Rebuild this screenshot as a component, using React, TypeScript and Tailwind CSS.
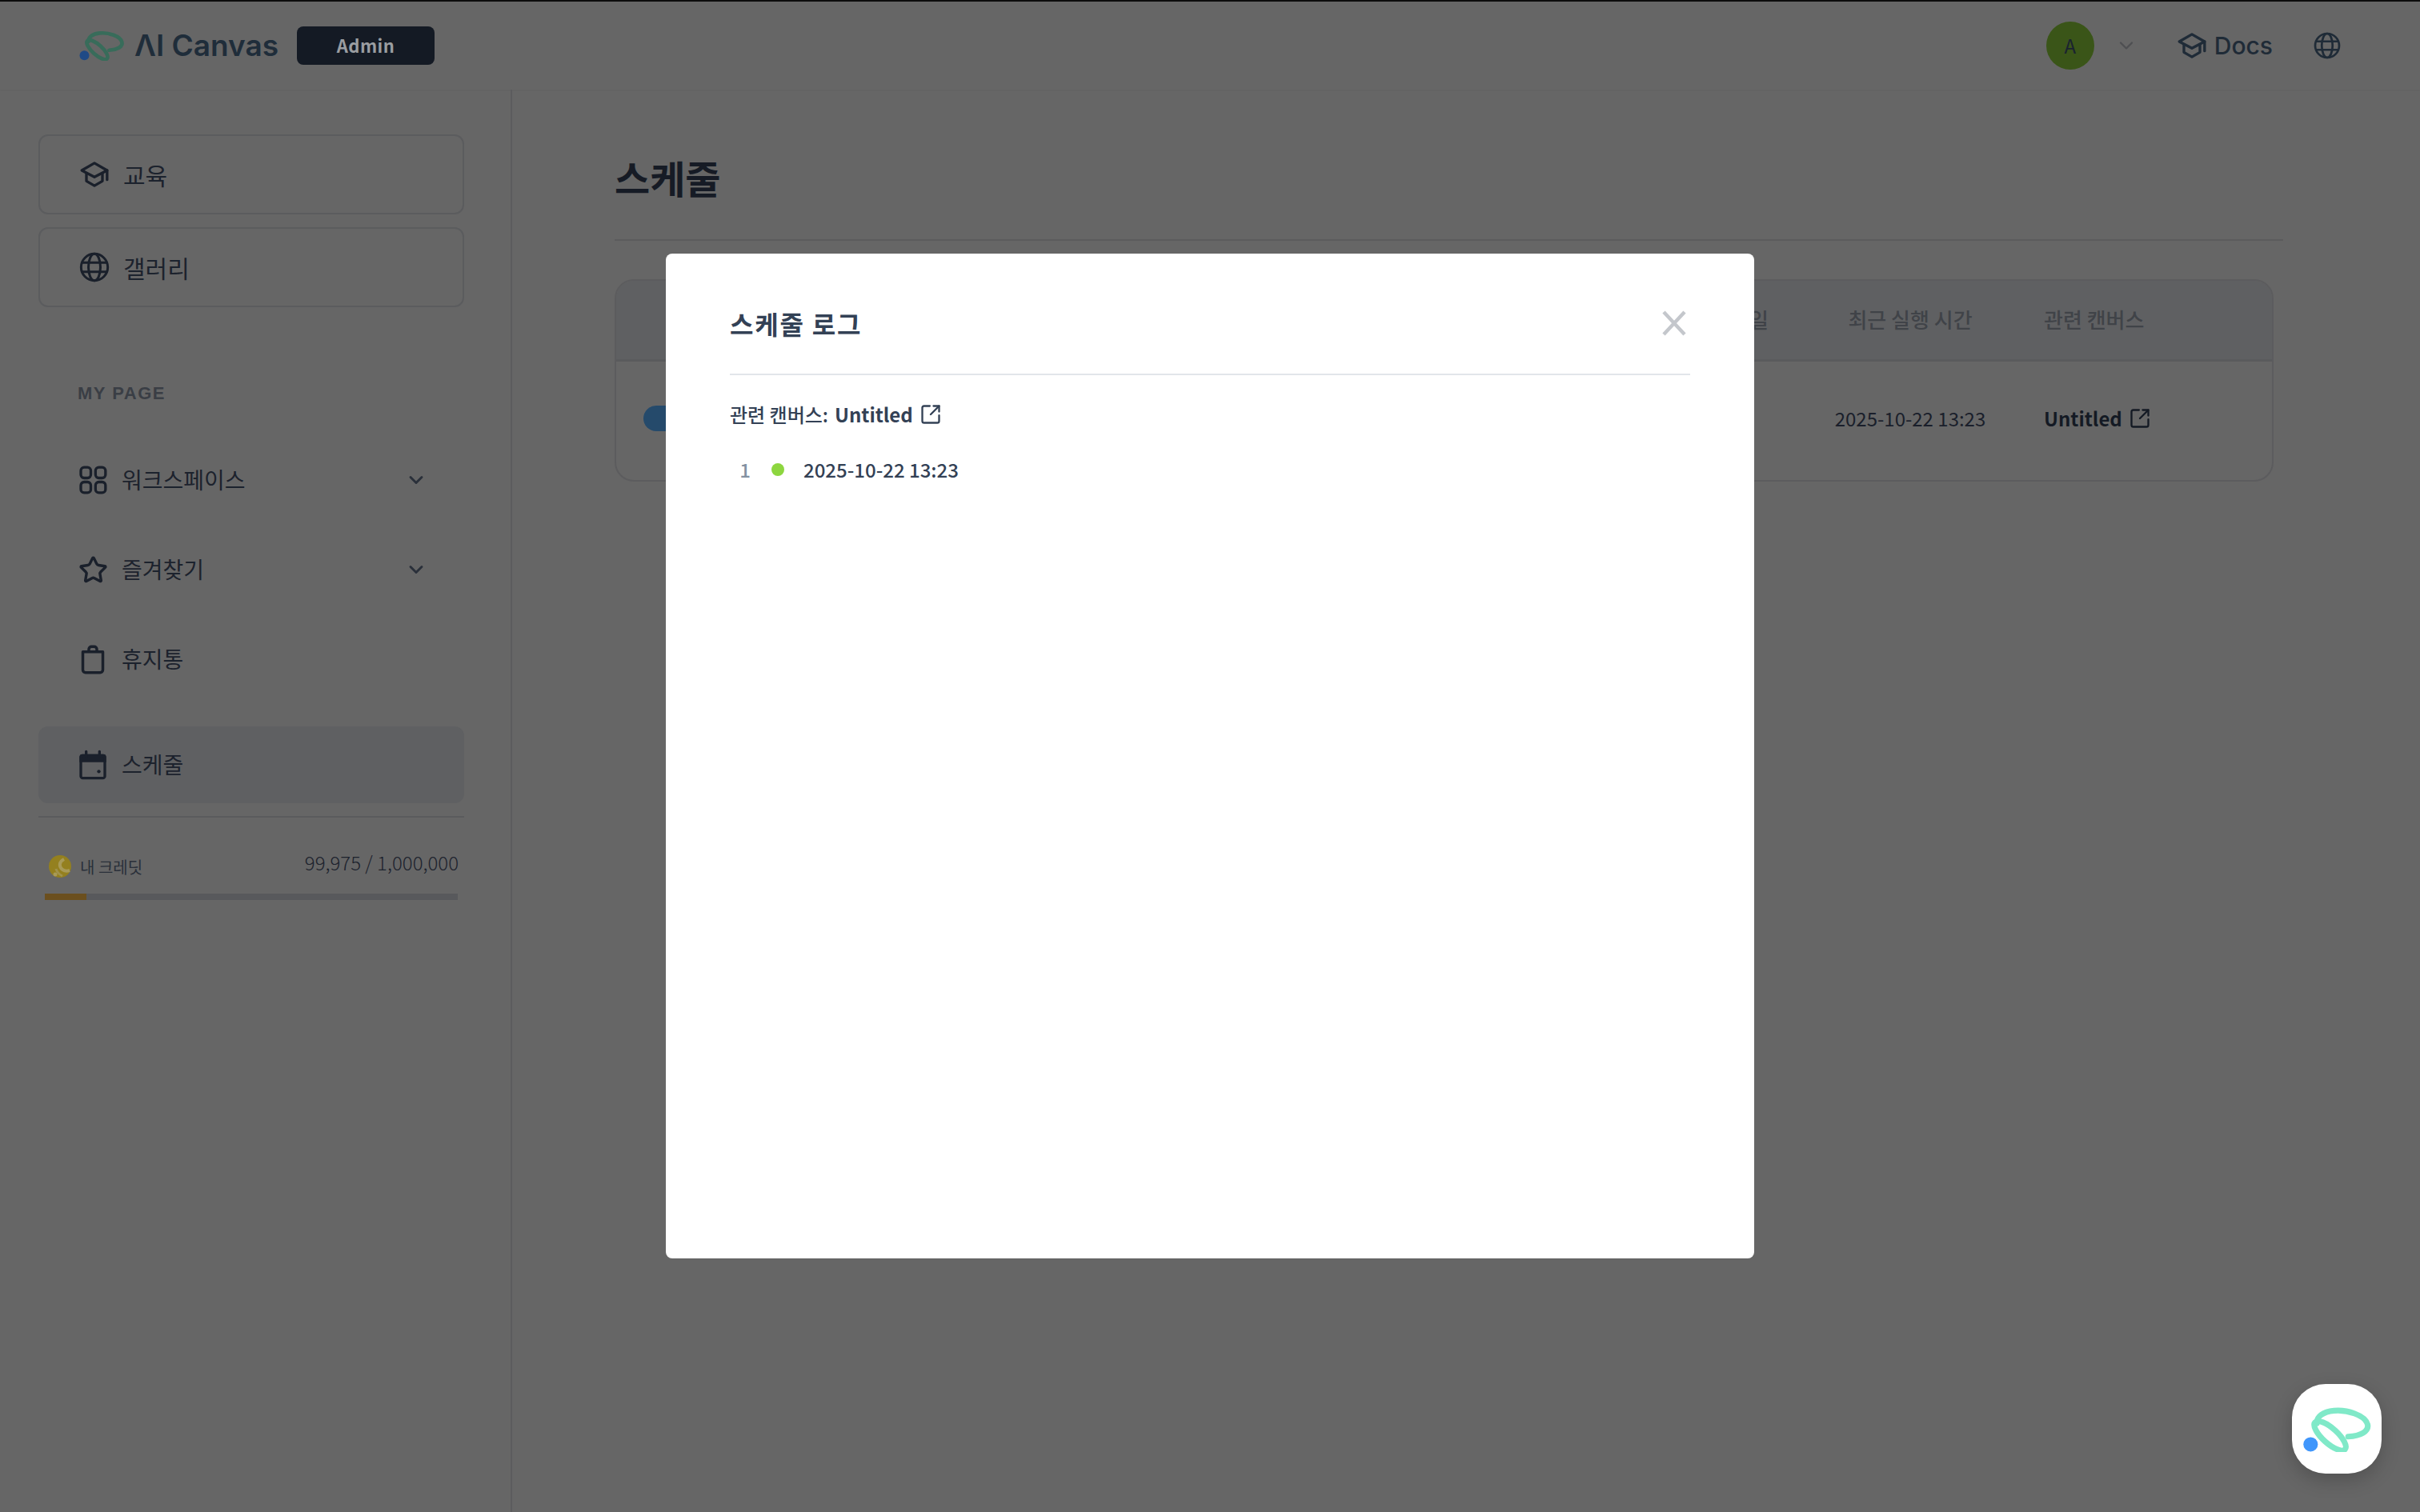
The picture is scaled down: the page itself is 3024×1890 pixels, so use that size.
import { ChevronDown, Star, SquareArrowOutUpRight } from "lucide-react";

const kr = "font-['Noto_Sans_CJK_KR','Noto_Sans',sans-serif]";

function LogoMark({ className, stroke, dot }: { className: string; stroke: string; dot: string }) {
  return (
    <svg viewBox="165 170 272 172" fill="none" className={className}>
      <circle cx="200" cy="313" r="28" fill={dot} />
      <path d="M345 283C395 280 426 262 420 236C411 200 340 178 290 183C248 187 222 206 224 232" stroke={stroke} strokeWidth="22" strokeLinecap="round" />
      <ellipse cx="275" cy="280" rx="78" ry="29" transform="rotate(42 275 280)" stroke={stroke} strokeWidth="22" />
    </svg>
  );
}

function CapIcon({ className }: { className: string }) {
  return (
    <svg viewBox="0 0 24 24" fill="none" stroke="currentColor" strokeWidth="2" strokeLinecap="round" strokeLinejoin="round" className={className}>
      <path d="M12 3.500 2.500 9 12 14l9.500-5z" />
      <path d="M6 11.500V17l6 3.500 6-3.500v-5.500" />
      <path d="M21.500 9v7" />
    </svg>
  );
}

function GlobeIcon({ className }: { className: string }) {
  return (
    <svg viewBox="0 0 24 24" fill="none" stroke="currentColor" strokeWidth="1.800" className={className}>
      <circle cx="12" cy="12" r="10" />
      <ellipse cx="12" cy="12" rx="4.500" ry="10" />
      <path d="M2.800 8.500h18.400M2.800 15.500h18.400" />
    </svg>
  );
}

function GridIcon({ className }: { className: string }) {
  return (
    <svg viewBox="0 0 24 24" fill="none" stroke="currentColor" strokeWidth="2" className={className}>
      <rect x="3" y="2.500" width="7.500" height="8" rx="2.500" />
      <rect x="14" y="2.500" width="7.500" height="8" rx="2.500" />
      <rect x="3" y="13.500" width="7.500" height="8" rx="2.500" />
      <rect x="14" y="13.500" width="7.500" height="8" rx="2.500" />
    </svg>
  );
}

function TrashIcon({ className }: { className: string }) {
  return (
    <svg viewBox="0 0 24 24" fill="none" stroke="currentColor" strokeWidth="2.100" strokeLinejoin="round" className={className}>
      <path d="M4.500 6.500h15V20a2 2 0 0 1-2 2h-11a2 2 0 0 1-2-2z" />
      <path d="M9 6.500V4.500a2 2 0 0 1 2-2h2a2 2 0 0 1 2 2v2" />
    </svg>
  );
}

function CalendarIcon({ className }: { className: string }) {
  return (
    <svg viewBox="0 0 24 24" fill="none" className={className}>
      <path d="M4 4h16a2 2 0 0 1 2 2v4H2V6a2 2 0 0 1 2-2z" fill="currentColor" />
      <rect x="3" y="5" width="18" height="17" rx="1.500" stroke="currentColor" strokeWidth="2" />
      <path d="M7 2v4M17 2v4" stroke="currentColor" strokeWidth="2" strokeLinecap="round" />
      <circle cx="16.500" cy="17" r="1.300" fill="currentColor" />
    </svg>
  );
}

function Coin() {
  return (
    <svg viewBox="0 0 28 28" className="w-[28px] h-[28px] shrink-0">
      <circle cx="14" cy="14" r="14" fill="#94801f" />
      <path d="M19 5C13 8 12 14 17 18c3 2 6 2 9 1" fill="none" stroke="#a89a58" strokeWidth="4" />
      <path d="M9 17c1 4 4 7 8 9" fill="none" stroke="#a0924c" strokeWidth="3" />
      <circle cx="8" cy="24" r="2.500" fill="#a89a58" />
    </svg>
  );
}

function NavItem({ icon, label, chevron, active }: { icon: React.ReactNode; label: string; chevron?: boolean; active?: boolean }) {
  return (
    <div className={`flex items-center h-[96px] pl-[48px] pr-[46px] rounded-[12px] gap-[16px] ${active ? "bg-[#5f6062]" : ""}`}>
      {icon}
      <span className="pb-[3px] text-[28px] leading-[40px] text-[#1c222d]">{label}</span>
      {chevron && <ChevronDown className="ml-auto w-[28px] h-[28px] text-[#2a303a]" strokeWidth={2.500} />}
    </div>
  );
}

function CardItem({ icon, label }: { icon: React.ReactNode; label: string }) {
  return (
    <div className="flex items-center h-[100px] pl-[48px] gap-[16px] rounded-[12px] border-2 border-[#5b5c5e]">
      {icon}
      <span className="text-[30px] leading-[40px] text-[#1c222d]">{label}</span>
    </div>
  );
}

export default function App() {
  const icon = "w-[40px] h-[40px] shrink-0 text-[#1a202b]";
  return (
    <div className={`relative w-full h-[1890px] overflow-hidden bg-[#666666] flex flex-col ${kr}`}>
      <header className="h-[112px] shrink-0 flex items-center border-t-2 border-[#0c0c0c] pl-[98px] pr-[98px] shadow-[0_1px_2px_rgba(0,0,0,0.04)]">
        <LogoMark className="w-[58px] h-[38px]" stroke="#386c5a" dot="#1f4a86" />
        <span className="ml-[12px] font-['Inter',sans-serif] font-semibold text-[37px] leading-[44px] text-[#1f2d3a]">ΛI Canvas</span>
        <div className="ml-[23px] w-[172px] h-[48px] pb-[2px] rounded-[8px] bg-[#141a24] flex items-center justify-center text-[22px] font-semibold tracking-[0.4px] text-[#9a9da1]">Admin</div>
        <div className="ml-auto flex items-center">
          <div className="w-[60px] h-[60px] rounded-full bg-[#3a5518] flex items-center justify-center text-[24px] text-[#1a2330]">A</div>
          <ChevronDown className="ml-[26px] w-[28px] h-[28px] text-[#4e4f52]" strokeWidth={2} />
          <CapIcon className="ml-[48px] w-[40px] h-[40px] text-[#1f2b37]" />
          <span className="ml-[8px] font-['Inter',sans-serif] font-medium text-[30px] leading-[40px] text-[#1f2b37]">Docs</span>
          <GlobeIcon className="ml-[50px] w-[36px] h-[36px] text-[#1f2b37]" />
        </div>
      </header>

      <div className="flex-1 flex min-h-0">
        <aside className="w-[640px] shrink-0 border-r-2 border-[#5c5c5e] pt-[56px] pl-[48px] pr-[58px]">
          <div className="flex flex-col gap-[16px]">
            <CardItem icon={<CapIcon className={icon} />} label="교육" />
            <CardItem icon={<GlobeIcon className={icon} />} label="갤러리" />
          </div>
          <div className="mt-[94px] pl-[49px] font-['Liberation_Sans',sans-serif] font-bold text-[22px] leading-[28px] tracking-[1.500px] text-[#3a3e45]">MY PAGE</div>
          <div className="mt-[46px] flex flex-col gap-[16px]">
            <NavItem icon={<GridIcon className={icon} />} label="워크스페이스" chevron />
            <NavItem icon={<Star className="w-[37px] h-[37px] mx-[1.500px] shrink-0 text-[#1a202b]" strokeWidth={2.200} />} label="즐겨찾기" chevron />
            <NavItem icon={<TrashIcon className={icon} />} label="휴지통" />
          </div>
          <div className="mt-[36px]">
            <NavItem icon={<CalendarIcon className={icon} />} label="스케줄" active />
          </div>
          <div className="mt-[16px] h-[2px] bg-[#5a5b5d]" />
          <div className="mt-[46px] pl-[13px] pr-[7px] flex items-center">
            <Coin />
            <span className="ml-[11px] mt-[2px] text-[20px] leading-[28px] text-[#2a303a]">내 크레딧</span>
            <span className="ml-auto -mt-[10px] text-[24px] leading-[32px] font-light text-[#1c222d]">99,975 / 1,000,000</span>
          </div>
          <div className="mt-[19px] ml-[8px] mr-[8px] h-[8px] bg-[#58595c]">
            <div className="h-full w-[52px] bg-[#6b4f1e]" />
          </div>
        </aside>

        <main className="flex-1 pt-[73px] pl-[128px] pr-[171px]">
          <div className="pb-[42px] border-b-2 border-[#5b5b5d]">
            <h1 className="text-[48px] leading-[72px] font-bold text-[#161b25]">스케줄</h1>
          </div>
          <div className="mt-[48px] mr-[12px] h-[253px] rounded-[24px] border-2 border-[#5c5c5e] overflow-hidden">
            <div className="grid grid-cols-[1450px_334px_1fr] items-center h-[101px] pb-[4px] bg-[#5f6062] border-b-[3px] border-[#5a5b5d] text-[26px] font-medium text-[#404348]">
              <div className="text-right pr-[10px]">시작일</div>
              <div className="text-center">최근 실행 시간</div>
              <div>관련 캔버스</div>
            </div>
            <div className="grid grid-cols-[1450px_334px_1fr] items-center h-[148px] pb-[6px] text-[24px] text-[#1a1f2b]">
              <div className="pl-[34px]">
                <div className="w-[64px] h-[32px] rounded-full bg-[#254a6b]" />
              </div>
              <div className="text-center">2025-10-22 13:23</div>
              <div className="flex items-center gap-[8px] font-semibold text-[#141a24]">
                Untitled
                <SquareArrowOutUpRight className="w-[28px] h-[28px]" strokeWidth={2} />
              </div>
            </div>
          </div>
        </main>
      </div>

      <div className="absolute inset-0 flex items-center justify-center">
        <div className="w-[1360px] h-[1256px] bg-white rounded-[8px] pt-[64px] px-[80px]">
          <div className="flex items-center justify-between pb-[38px] border-b-2 border-[#e2e5ea]">
            <h2 className="pb-[1px] text-[32px] leading-[47px] font-bold tracking-[1.800px] text-[#334155]">스케줄 로그</h2>
            <svg viewBox="0 0 36 36" className="w-[36px] h-[36px] mr-[2px] mb-[2px]" fill="none" stroke="#c4c7cc" strokeWidth="4.500">
              <path d="M5 4l26 28M31 4 5 32" />
            </svg>
          </div>
          <div className="mt-[31px] flex items-center h-[36px] text-[24px] leading-[36px] font-medium text-[#334155]">
            <span>관련 캔버스:</span>
            <span className="ml-[8px] font-semibold">Untitled</span>
            <SquareArrowOutUpRight className="ml-[8px] w-[28px] h-[28px]" strokeWidth={2} />
          </div>
          <div className="mt-[33px] flex items-center h-[36px] text-[24px] leading-[36px] font-medium text-[#334155]">
            <span className="w-[38px] text-center text-[#8391a1]">1</span>
            <span className="ml-[14px] w-[16px] h-[16px] rounded-full bg-[#8dd63f]" />
            <span className="ml-[24px]">2025-10-22 13:23</span>
          </div>
        </div>
      </div>

      <div className="absolute right-[48px] bottom-[48px] w-[112px] h-[112px] rounded-[42px] bg-white shadow-[0_8px_24px_rgba(0,0,0,0.2)] flex items-center justify-center">
        <LogoMark className="w-[88px] h-[56px] mt-[2px]" stroke="#80e9c8" dot="#4096fb" />
      </div>
    </div>
  );
}
